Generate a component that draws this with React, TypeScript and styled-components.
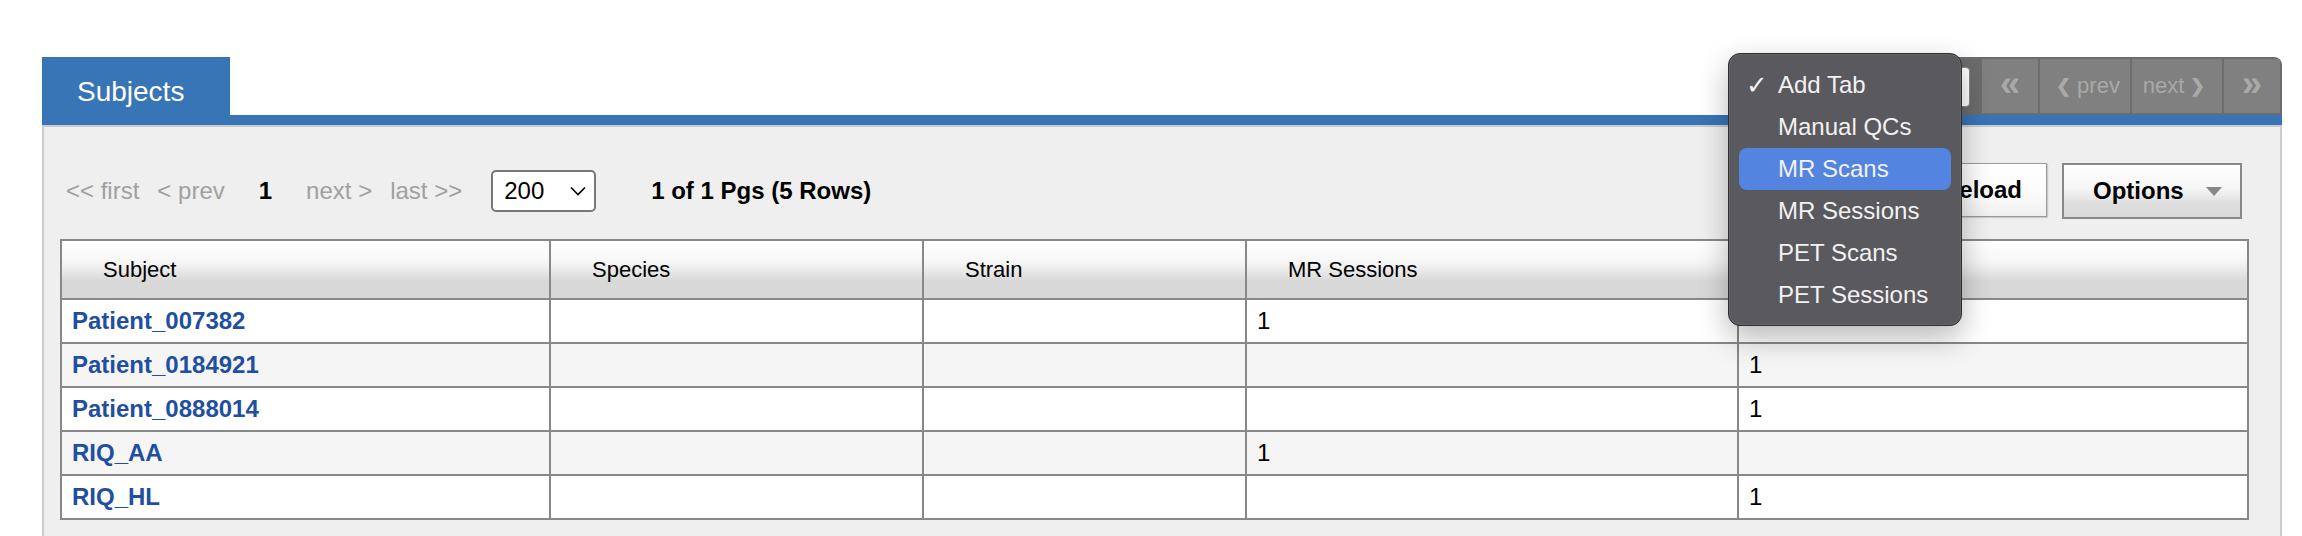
import React from 'react';
import styled, { createGlobalStyle } from 'styled-components';

const GlobalStyle = createGlobalStyle`
  html, body {
    margin: 0;
    padding: 0;
    background: #fff;
  }
  body {
    font-family: "Liberation Sans", Arial, sans-serif;
    color: #000;
  }
`;

const Page = styled.div`
  position: relative;
  height: 536px;
  padding: 57px 20px 0 42px;
  box-sizing: border-box;
  overflow: hidden;
`;

const TabStrip = styled.div`
  display: flex;
  align-items: flex-end;
  justify-content: space-between;
  height: 58px;
`;

const Tab = styled.div`
  width: 188px;
  height: 58px;
  box-sizing: border-box;
  padding: 12px 0 0 35px;
  display: flex;
  align-items: center;
  background: #3775b6;
  color: #fff;
  font-size: 28px;
`;

const TopPager = styled.div`
  display: flex;
  align-items: stretch;
  gap: 2px;
  height: 58px;
  box-sizing: border-box;
  padding: 2px 2px 2px 10px;
  background: #6c6c6c;
  border-radius: 8px 8px 0 0;
`;

const TabSelect = styled.div`
  width: 200px;
  margin: 8px 10px 6px 0;
  background: #fff;
  border: 1px solid #8a8a8a;
  border-radius: 4px;
`;

const PagerCell = styled.div<{ $w: number }>`
  width: ${p => p.$w}px;
  display: flex;
  align-items: center;
  justify-content: center;
  background: #808080;
  color: #a9a9a9;
  font-size: 22px;
`;

const Chevrons = styled.span`
  font-size: 36px;
  font-weight: bold;
  line-height: 1;
  margin-top: -5px;
`;

const Angle = styled.span`
  font-size: 18px;
  font-weight: bold;
  margin: 0 6px;
`;

const BlueBar = styled.div`
  height: 10px;
  background: #3775b6;
`;

const Panel = styled.div`
  height: 420px;
  border: 2px solid #cccccc;
  border-bottom: none;
  background: #efefef;
  padding: 36px 33px 0 16px;
`;

const Toolbar = styled.div`
  display: flex;
  align-items: center;
  justify-content: space-between;
  height: 56px;
`;

const Paging = styled.div`
  display: flex;
  align-items: center;
  padding-left: 6px;
  font-size: 24px;
`;

const PageLink = styled.span<{ $space: number; $current?: boolean }>`
  margin-right: ${p => p.$space}px;
  color: ${p => (p.$current ? '#000' : '#a0a0a0')};
  font-weight: ${p => (p.$current ? 'bold' : 'normal')};
`;

const SizeSelect = styled.div`
  width: 105px;
  height: 42px;
  box-sizing: border-box;
  margin-right: 55px;
  padding: 0 8px 0 11px;
  display: flex;
  align-items: center;
  justify-content: space-between;
  background: #fff;
  border: 2px solid #777;
  border-radius: 5px;
  font-size: 24px;
`;

const PageCount = styled.span`
  font-weight: bold;
`;

const Buttons = styled.div`
  display: flex;
  align-items: center;
  gap: 15px;
  margin-right: 5px;
`;

const ReloadButton = styled.div`
  width: 130px;
  height: 54px;
  box-sizing: border-box;
  margin-top: -2px;
  display: flex;
  align-items: center;
  justify-content: center;
  background: linear-gradient(#fff 0%, #fbfbfb 60%, #f0f0f0 100%);
  border: 1px solid #9a9a9a;
  box-shadow: 1px 1px 1px rgba(0, 0, 0, 0.15);
  font-size: 24px;
  font-weight: bold;
`;

const OptionsButton = styled.div`
  width: 180px;
  height: 56px;
  box-sizing: border-box;
  padding-left: 29px;
  display: flex;
  align-items: center;
  gap: 22px;
  background: linear-gradient(#fff 0%, #f6f6f6 45%, #dedede 75%, #d9d9d9 100%);
  border: 2px solid #888;
  font-size: 24px;
  font-weight: bold;
`;

const Caret = styled.span`
  width: 0;
  height: 0;
  border-left: 8px solid transparent;
  border-right: 8px solid transparent;
  border-top: 9px solid #888;
`;

const Grid = styled.table`
  width: 100%;
  margin-top: 20px;
  border-collapse: collapse;
  table-layout: fixed;
  border: 2px solid #888;
`;

const Col = styled.col<{ $w: number }>`
  width: ${p => p.$w}px;
`;

const HeadCell = styled.th`
  height: 57px;
  padding: 0 0 0 41px;
  text-align: left;
  font-size: 22px;
  font-weight: normal;
  border: 2px solid #888;
  background: linear-gradient(#fff 0%, #f7f7f7 35%, #e2e2e2 60%, #d8d8d8 70%, #d8d8d8 100%);
`;

const Row = styled.tr<{ $alt: boolean }>`
  background: ${p => (p.$alt ? '#f5f5f5' : '#fff')};
`;

const Cell = styled.td`
  height: 42px;
  padding: 0 10px;
  border: 2px solid #888;
  font-size: 24px;
`;

const SubjectLink = styled.a`
  color: #1f4fa0;
  font-weight: bold;
  text-decoration: none;
`;

const Menu = styled.div`
  position: absolute;
  left: 1728px;
  top: 53px;
  width: 234px;
  box-sizing: border-box;
  padding: 10px 0 9px;
  background: #5a595e;
  border: 1px solid #2e2e30;
  border-radius: 12px;
  box-shadow: 0 12px 30px rgba(0, 0, 0, 0.28), inset 0 0 0 1px rgba(255, 255, 255, 0.08);
`;

const MenuItem = styled.div<{ $active?: boolean }>`
  position: relative;
  height: 42px;
  margin: 0 10px;
  padding-left: 39px;
  display: flex;
  align-items: center;
  border-radius: 8px;
  background: ${p => (p.$active ? '#5384e0' : 'transparent')};
  color: #f2f2f2;
  font-size: 24px;
`;

const Check = styled.span`
  position: absolute;
  left: 7px;
  top: 6px;
  font-family: "DejaVu Sans", sans-serif;
  font-size: 26px;
  font-weight: bold;
`;

const columns = [
  { name: 'Subject', width: 489 },
  { name: 'Species', width: 373 },
  { name: 'Strain', width: 323 },
  { name: 'MR Sessions', width: 492 },
  { name: 'PET Sessions', width: 510 }
];

const subjects = [
  { id: 'Patient_007382', mr: '1', pet: '' },
  { id: 'Patient_0184921', mr: '', pet: '1' },
  { id: 'Patient_0888014', mr: '', pet: '1' },
  { id: 'RIQ_AA', mr: '1', pet: '' },
  { id: 'RIQ_HL', mr: '', pet: '1' }
];

const menuItems = ['Add Tab', 'Manual QCs', 'MR Scans', 'MR Sessions', 'PET Scans', 'PET Sessions'];

const SelectChevron = () => (
  <svg width="16" height="10" viewBox="0 0 16 10">
    <path d="M1 1.5 L8 8.5 L15 1.5" fill="none" stroke="#000" strokeWidth="1.6" />
  </svg>
);

const App = () => (
  <Page>
    <GlobalStyle />
    <TabStrip>
      <Tab>Subjects</Tab>
      <TopPager>
        <TabSelect />
        <PagerCell $w={56}>
          <Chevrons>«</Chevrons>
        </PagerCell>
        <PagerCell $w={90}>
          <Angle>❮</Angle>prev
        </PagerCell>
        <PagerCell $w={90}>
          next<Angle>❯</Angle>
        </PagerCell>
        <PagerCell $w={56}>
          <Chevrons>»</Chevrons>
        </PagerCell>
      </TopPager>
    </TabStrip>
    <BlueBar />
    <Panel>
      <Toolbar>
        <Paging>
          <PageLink $space={18}>&lt;&lt; first</PageLink>
          <PageLink $space={34}>&lt; prev</PageLink>
          <PageLink $space={34} $current>1</PageLink>
          <PageLink $space={18}>next &gt;</PageLink>
          <PageLink $space={29}>last &gt;&gt;</PageLink>
          <SizeSelect>
            200
            <SelectChevron />
          </SizeSelect>
          <PageCount>1 of 1 Pgs (5 Rows)</PageCount>
        </Paging>
        <Buttons>
          <ReloadButton>Reload</ReloadButton>
          <OptionsButton>
            Options
            <Caret />
          </OptionsButton>
        </Buttons>
      </Toolbar>
      <Grid>
        <colgroup>
          {columns.map(c => (
            <Col key={c.name} $w={c.width} />
          ))}
        </colgroup>
        <thead>
          <tr>
            {columns.map(c => (
              <HeadCell key={c.name}>{c.name}</HeadCell>
            ))}
          </tr>
        </thead>
        <tbody>
          {subjects.map((s, i) => (
            <Row key={s.id} $alt={i % 2 === 1}>
              <Cell>
                <SubjectLink href="#">{s.id}</SubjectLink>
              </Cell>
              <Cell />
              <Cell />
              <Cell>{s.mr}</Cell>
              <Cell>{s.pet}</Cell>
            </Row>
          ))}
        </tbody>
      </Grid>
    </Panel>
    <Menu>
      {menuItems.map((item, i) => (
        <MenuItem key={item} $active={item === 'MR Scans'}>
          {i === 0 && <Check>✓</Check>}
          {item}
        </MenuItem>
      ))}
    </Menu>
  </Page>
);

export default App;
